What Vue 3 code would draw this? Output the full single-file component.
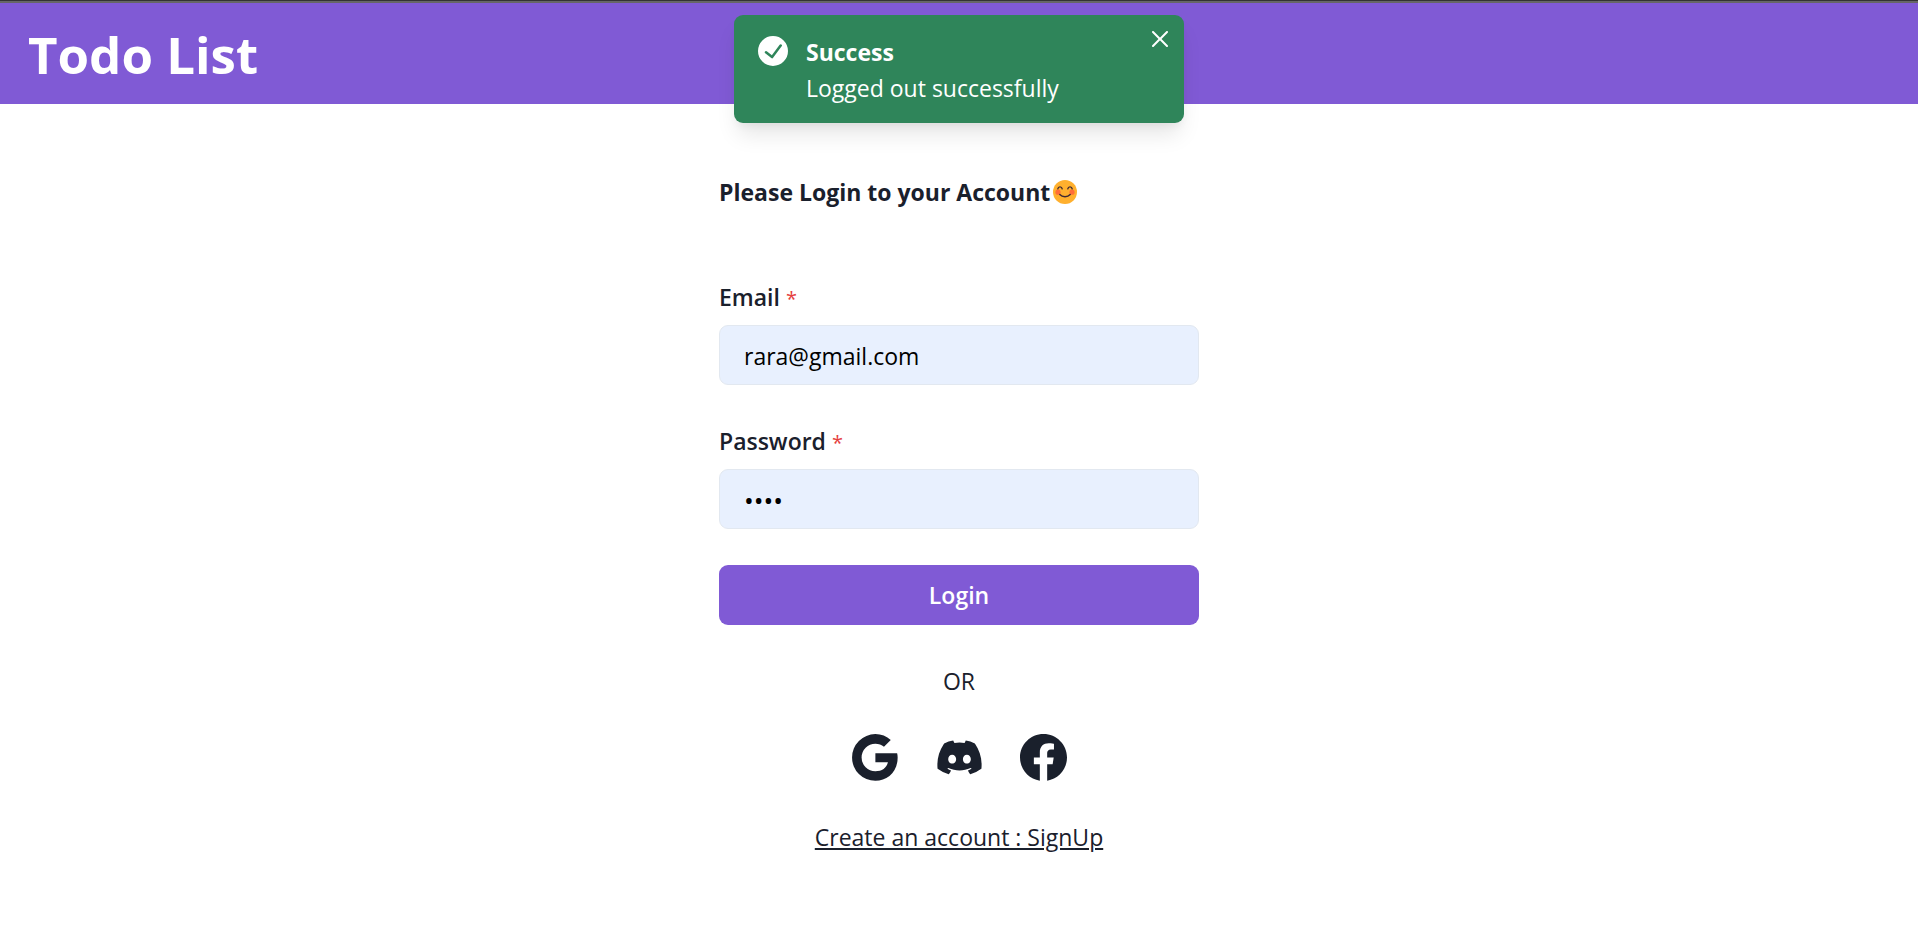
<script setup>
import { ref } from 'vue'

const email = ref('rara@gmail.com')
const password = ref('rara')
const toastOpen = ref(true)
</script>

<template>
  <div class="page">
    <header class="topbar">
      <h1>Todo List</h1>
    </header>

    <div v-if="toastOpen" class="toast" role="status">
      <svg class="toast-icon" viewBox="0 0 24 24" aria-hidden="true">
        <path fill="currentColor" d="M12,0A12,12,0,1,0,24,12,12.014,12.014,0,0,0,12,0Zm6.927,8.2-6.845,9.289a1.011,1.011,0,0,1-1.43.188L5.764,13.769a1,1,0,1,1,1.25-1.562l4.076,3.261,6.227-8.451A1,1,0,1,1,18.927,8.2Z" />
      </svg>
      <div class="toast-body">
        <strong>Success</strong>
        <span>Logged out successfully</span>
      </div>
      <button class="toast-close" type="button" aria-label="Close" @click="toastOpen = false">
        <svg viewBox="0 0 24 24" aria-hidden="true">
          <path fill="currentColor" d="M.439,21.44a1.5,1.5,0,0,0,2.122,2.121L11.823,14.3a.25.25,0,0,1,.354,0l9.262,9.263a1.5,1.5,0,1,0,2.122-2.121L14.3,12.177a.25.25,0,0,1,0-.354l9.263-9.262A1.5,1.5,0,0,0,21.439.44L12.177,9.7a.25.25,0,0,1-.354,0L2.561.44A1.5,1.5,0,0,0,.439,2.561L9.7,11.823a.25.25,0,0,1,0,.354Z" />
        </svg>
      </button>
    </div>

    <main class="login">
      <h2>
        Please Login to your Account
        <svg class="smile" viewBox="0 0 24 24" role="img" aria-label="Smiling face">
          <circle cx="12" cy="12" r="12" fill="#ffb02e" />
          <circle cx="5" cy="12.200" r="2.600" fill="#ff6d3a" />
          <circle cx="19" cy="12.200" r="2.600" fill="#ff6d3a" />
          <g fill="none" stroke="#402a32" stroke-width="1.400" stroke-linecap="round">
            <path d="M4.800 8.800c.5-2.600 3.900-2.600 4.400 0M14.800 8.800c.5-2.600 3.900-2.600 4.400 0M6.800 14.500c2.600 3 7.800 3 10.400 0" />
          </g>
        </svg>
      </h2>

      <form @submit.prevent>
        <div class="field">
          <label for="email">Email <span class="required">*</span></label>
          <input id="email" v-model="email" type="email" required />
        </div>
        <div class="field">
          <label for="password">Password <span class="required">*</span></label>
          <input id="password" v-model="password" type="password" required />
        </div>
        <button class="submit" type="submit">Login</button>
      </form>

      <p class="or">OR</p>

      <div class="socials">
        <button type="button" aria-label="Google">
          <svg viewBox="3 3 18 18" aria-hidden="true">
            <path d="M20.283 10.356h-8.327v3.451h4.792c-.446 2.193-2.313 3.453-4.792 3.453a5.27 5.27 0 0 1-5.279-5.28 5.27 5.27 0 0 1 5.279-5.279c1.259 0 2.397.447 3.290 1.178l2.600-2.599c-1.584-1.381-3.615-2.233-5.890-2.233a8.908 8.908 0 0 0-8.934 8.934 8.907 8.907 0 0 0 8.934 8.934c4.467 0 8.529-3.249 8.529-8.934 0-.528-.081-1.097-.202-1.625z" />
          </svg>
        </button>
        <button type="button" aria-label="Discord">
          <svg viewBox="-0.500 -0.500 17 17" aria-hidden="true">
            <path d="M13.545 2.907a13.227 13.227 0 0 0-3.257-1.011.05.05 0 0 0-.052.025c-.141.25-.297.577-.406.833a12.190 12.190 0 0 0-3.658 0 8.258 8.258 0 0 0-.412-.833.051.051 0 0 0-.052-.025c-1.125.194-2.220.534-3.257 1.011a.041.041 0 0 0-.021.018C.356 6.024-.213 9.047.066 12.032c.001.014.010.028.021.037a13.276 13.276 0 0 0 3.995 2.020.050.050 0 0 0 .056-.019c.308-.420.582-.863.818-1.329a.050.050 0 0 0-.010-.059.051.051 0 0 0-.018-.011 8.875 8.875 0 0 1-1.248-.595.050.050 0 0 1-.020-.066.051.051 0 0 1 .015-.019c.084-.063.168-.129.248-.195a.050.050 0 0 1 .051-.007c2.619 1.196 5.454 1.196 8.041 0a.052.052 0 0 1 .053.007c.080.066.164.132.248.195a.051.051 0 0 1-.004.085 8.254 8.254 0 0 1-1.249.594.050.050 0 0 0-.030.030.052.052 0 0 0 .003.041c.240.465.515.909.817 1.329a.050.050 0 0 0 .056.019 13.235 13.235 0 0 0 4.001-2.020.049.049 0 0 0 .021-.037c.334-3.451-.559-6.449-2.366-9.106a.034.034 0 0 0-.020-.019Zm-8.198 7.307c-.789 0-1.438-.724-1.438-1.612 0-.889.637-1.613 1.438-1.613.807 0 1.450.730 1.438 1.613 0 .888-.637 1.612-1.438 1.612Zm5.316 0c-.788 0-1.438-.724-1.438-1.612 0-.889.637-1.613 1.438-1.613.807 0 1.451.730 1.438 1.613 0 .888-.631 1.612-1.438 1.612Z" />
          </svg>
        </button>
        <button type="button" aria-label="Facebook">
          <svg viewBox="2 2 20 20" aria-hidden="true">
            <path d="M12.001 2.002c-5.522 0-9.999 4.477-9.999 9.999 0 4.990 3.656 9.126 8.437 9.879v-6.988h-2.540v-2.891h2.540V9.798c0-2.508 1.493-3.891 3.776-3.891 1.094 0 2.240.195 2.240.195v2.459h-1.264c-1.240 0-1.628.772-1.628 1.563v1.875h2.771l-.443 2.891h-2.328v6.988C18.344 21.129 22 16.992 22 12.001c0-5.522-4.477-9.999-9.999-9.999z" />
          </svg>
        </button>
      </div>

      <a class="signup" href="#signup">Create an account : SignUp</a>
    </main>
  </div>
</template>

<style>
body {
  margin: 0;
  background: #fff;
}
</style>

<style scoped>
.page {
  font-family: "Open Sans", "Noto Sans", sans-serif;
  font-size: 23px;
  line-height: 36px;
  color: #1a202c;
}
.topbar {
  padding: 19px 28px 15px;
  background: #805ad5;
  border-top: 1px solid #333;
  box-shadow: inset 0 2px #666;
}
h1 {
  margin: 0;
  font-size: 51px;
  line-height: 69px;
  font-weight: 700;
  color: #fff;
}
.toast {
  position: absolute;
  top: 15px;
  left: 50%;
  transform: translateX(-50%);
  box-sizing: border-box;
  width: 450px;
  max-width: 100%;
  padding: 19px 24px 17px;
  display: flex;
  gap: 18px;
  color: #fff;
  background: #2f855a;
  border-radius: 9px;
  box-shadow: 0 15px 22px -4px rgba(0, 0, 0, 0.1), 0 6px 9px -3px rgba(0, 0, 0, 0.05);
}
.toast-icon {
  width: 30px;
  height: 30px;
  margin-top: 2px;
}
.toast-body {
  display: flex;
  flex-direction: column;
}
.toast-close {
  position: absolute;
  top: 6px;
  right: 6px;
  width: 36px;
  height: 36px;
  padding: 0;
  display: flex;
  align-items: center;
  justify-content: center;
  color: inherit;
  background: none;
  border: 0;
}
.toast-close svg {
  width: 16px;
  height: 16px;
}
.login {
  box-sizing: border-box;
  width: 480px;
  max-width: 100%;
  margin: 0 auto;
  padding-top: 70px;
  display: flex;
  flex-direction: column;
}
h2 {
  margin: 0 0 67px;
  display: flex;
  align-items: center;
  gap: 3px;
  font-size: 23px;
  line-height: 36px;
  font-weight: 700;
}
.smile {
  width: 24px;
  height: 24px;
}
form,
.field {
  display: flex;
  flex-direction: column;
}
.field {
  gap: 10px;
  padding-top: 2px;
  margin-bottom: 36px;
}
label {
  font-weight: 600;
}
.required {
  font-size: 20px;
  line-height: 20px;
  color: #e53e3e;
  font-weight: 400;
}
input {
  box-sizing: border-box;
  width: 100%;
  height: 60px;
  margin: 0;
  padding: 2px 24px 0;
  font: inherit;
  color: #000;
  background: #e8f0fe;
  border: 1px solid #e2e8f0;
  border-radius: 9px;
  outline: 0;
}
input[type="password"] {
  font-size: 26px;
}
.submit {
  height: 60px;
  padding: 0;
  font: inherit;
  font-weight: 600;
  color: #fff;
  background: #805ad5;
  border: 0;
  border-radius: 9px;
}
.or {
  margin: 38px 0 35px;
  text-align: center;
}
.socials {
  display: flex;
  justify-content: center;
  gap: 37px;
}
.socials button {
  padding: 0;
  color: inherit;
  background: none;
  border: 0;
}
.socials svg {
  display: block;
  width: 47px;
  height: 47px;
  fill: currentColor;
}
.signup {
  align-self: center;
  margin-top: 38px;
  color: inherit;
  text-decoration: underline;
}
</style>
